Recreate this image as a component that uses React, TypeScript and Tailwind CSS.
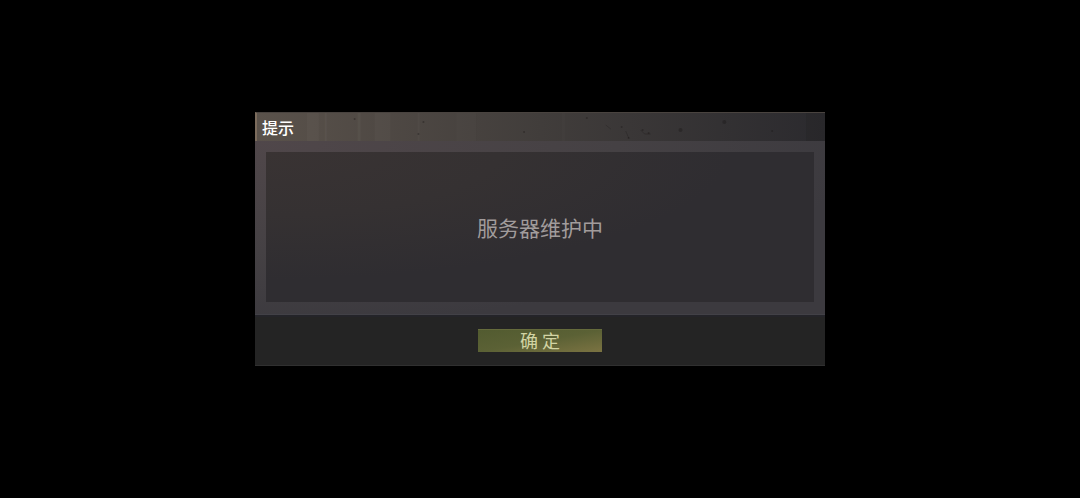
import { useId } from 'react';

const scratches = [
  { x: 50, width: 12, opacity: 0.03 },
  { x: 68, width: 2, opacity: 0.04 },
  { x: 101, width: 3, opacity: 0.04 },
  { x: 118, width: 16, opacity: 0.03 },
  { x: 161, width: 2, opacity: 0.03 },
  { x: 200, width: 20, opacity: 0.02 },
  { x: 306, width: 3, opacity: 0.02 },
];

const pits = [
  { x: 98, y: 6, r: 1 },
  { x: 162, y: 21, r: 1 },
  { x: 167, y: 9, r: 1 },
  { x: 268, y: 19, r: 1 },
  { x: 331, y: 5, r: 1 },
  { x: 366, y: 14, r: 1 },
  { x: 373, y: 25, r: 1 },
  { x: 387, y: 17, r: 1 },
  { x: 393, y: 20, r: 1 },
  { x: 425, y: 17, r: 2 },
  { x: 469, y: 9, r: 2 },
  { x: 517, y: 18, r: 1 },
];

function MetalTexture() {
  return (
    <svg
      viewBox="0 0 570 28"
      preserveAspectRatio="none"
      className="absolute inset-0 h-full w-full"
      aria-hidden="true"
    >
      {scratches.map((s) => (
        <rect key={s.x} x={s.x} y="0" width={s.width} height="28" fill="#e0dcd6" opacity={s.opacity} />
      ))}
      {pits.map((p) => (
        <circle key={p.x} cx={p.x} cy={p.y} r={p.r} fill="#171514" opacity="0.35" />
      ))}
      <path d="M370 18l3 7M385 17l4 4 6 0M350 12l5 4" fill="none" stroke="#1b1918" strokeWidth="1" opacity="0.3" />
      <rect x="551" y="0" width="19" height="28" fill="#1d1c20" opacity="0.2" />
    </svg>
  );
}

interface DialogProps {
  title: string;
  message: string;
  confirmLabel: string;
}

function NoticeDialog({ title, message, confirmLabel }: DialogProps) {
  const titleId = useId();
  const messageId = useId();

  return (
    <section
      role="alertdialog"
      aria-labelledby={titleId}
      aria-describedby={messageId}
      className="w-full max-w-[570px]"
    >
      <header className="relative border-t border-l-2 border-t-[#49433f] border-l-[#7b6b5c] bg-linear-to-r from-[#5a524b] via-[#413d3b] via-50% to-[#2b2a2e] px-[5px] py-0.5">
        <MetalTexture />
        <h1 id={titleId} className="relative text-base leading-6 font-medium text-white">
          {title}
        </h1>
      </header>

      <div className="border-b border-[#424147] bg-[#3c3a3f] bg-[radial-gradient(ellipse_at_top_left,#50474a_0%,#454144_45%,#3c3a3f_75%)] px-[11px] pt-[11px] pb-3">
        <div className="flex min-h-[150px] items-center justify-center bg-[#2f2d31] bg-[radial-gradient(ellipse_at_top_left,#393333_0%,#353132_30%,#2f2d31_60%)] p-4">
          <p id={messageId} className="text-[21px] leading-8 text-[#a19c9c]">
            {message}
          </p>
        </div>
      </div>

      <footer className="flex justify-center border-t-2 border-b border-t-[#242429] border-b-[#303030] bg-[#242424] pt-3 pb-[13px]">
        <button
          type="button"
          className="min-w-[124px] cursor-pointer border-t border-[#656b3c] bg-linear-to-br from-[#525b30] via-[#5b6135] to-[#7b7342] pb-0.5 text-lg leading-5 text-[#d2d4a4]"
        >
          {confirmLabel}
        </button>
      </footer>
    </section>
  );
}

export default function App() {
  return (
    <main
      lang="zh-CN"
      className="flex min-h-screen items-center justify-center bg-black pb-5 font-['Noto_Sans_CJK_SC',sans-serif]"
    >
      <NoticeDialog title="提示" message="服务器维护中" confirmLabel="确 定" />
    </main>
  );
}
